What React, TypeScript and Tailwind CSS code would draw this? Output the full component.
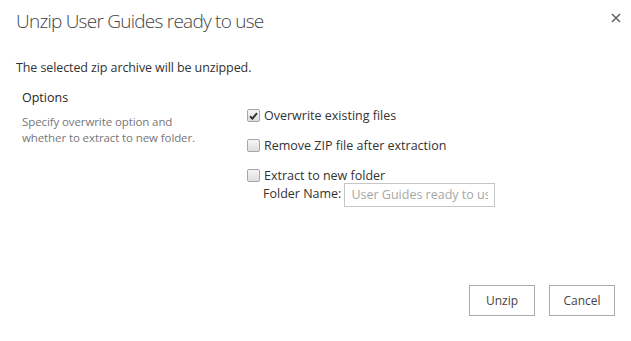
import { useState } from "react";

function Check({ checked, onChange }: { checked: boolean; onChange: () => void }) {
  return (
    <button
      onClick={onChange}
      className="w-[13px] h-[13px] rounded-[2px] border border-[#a6a6a6] bg-gradient-to-b from-[#f6f6f6] to-[#dedede] flex items-center justify-center shrink-0"
    >
      {checked && (
        <svg width="9" height="8" viewBox="0 0 9 8">
          <path d="M1 4.2 L3.4 6.6 L8 1.2" stroke="#333" strokeWidth="2" fill="none" />
        </svg>
      )}
    </button>
  );
}

export default function App() {
  const [overwrite, setOverwrite] = useState(true);
  const [removeZip, setRemoveZip] = useState(false);
  const [extract, setExtract] = useState(false);

  return (
    <div className="w-[631px] h-[341px] bg-white relative text-[#333] font-['Open_Sans',sans-serif] overflow-hidden">
      <div className="flex items-start justify-between pl-4 pr-[8px] pt-[7px]">
        <h1 className="text-[19px] font-light text-[#444] tracking-[-0.75px]">Unzip User Guides ready to use</h1>
        <button className="mt-[4px] w-[14px] h-[14px] flex items-center justify-center">
          <svg width="10" height="10" viewBox="0 0 10 10">
            <path d="M1 1 L9 9 M9 1 L1 9" stroke="#666" strokeWidth="1.6" />
          </svg>
        </button>
      </div>

      <p className="pl-4 mt-[23px] text-[12.5px] leading-[18px] tracking-[-0.1px]">The selected zip archive will be unzipped.</p>

      <div className="flex mt-[12px]">
        <div className="pl-[22px] w-[247px]">
          <div className="text-[12.5px] leading-[18px] text-[#262626]">Options</div>
          <div className="mt-[7px] text-[11.5px] leading-[16px] text-[#777] w-[190px] tracking-[-0.1px]">
            Specify overwrite option and whether to extract to new folder.
          </div>
        </div>
        <div className="flex flex-col gap-[12px] pt-[18px]">
          <label className="flex items-center gap-[4px] text-[12.5px] leading-[18px]">
            <Check checked={overwrite} onChange={() => setOverwrite(!overwrite)} />
            <span>Overwrite existing files</span>
          </label>
          <label className="flex items-center gap-[4px] text-[12.5px] leading-[18px]">
            <Check checked={removeZip} onChange={() => setRemoveZip(!removeZip)} />
            <span>Remove ZIP file after extraction</span>
          </label>
          <div>
            <label className="flex items-center gap-[4px] text-[12.5px] leading-[18px]">
              <Check checked={extract} onChange={() => setExtract(!extract)} />
              <span>Extract to new folder</span>
            </label>
            <div className="flex items-center pl-[16px] -mt-[2px] text-[12.5px]">
              <span className="mr-[3px]">Folder Name:</span>
              <input
                placeholder="User Guides ready to use"
                className="w-[151px] h-[24px] border border-[#c6c6c6] px-[6px] text-[12.5px] placeholder:text-[#a6a6a6] outline-none"
              />
            </div>
          </div>
        </div>
      </div>

      <div className="absolute right-[16px] bottom-[25px] flex gap-[14px]">
        <button className="w-[66px] h-[31px] border border-[#ababab] text-[12px] text-[#444]">Unzip</button>
        <button className="w-[66px] h-[31px] border border-[#ababab] text-[12px] text-[#444]">Cancel</button>
      </div>
    </div>
  );
}
